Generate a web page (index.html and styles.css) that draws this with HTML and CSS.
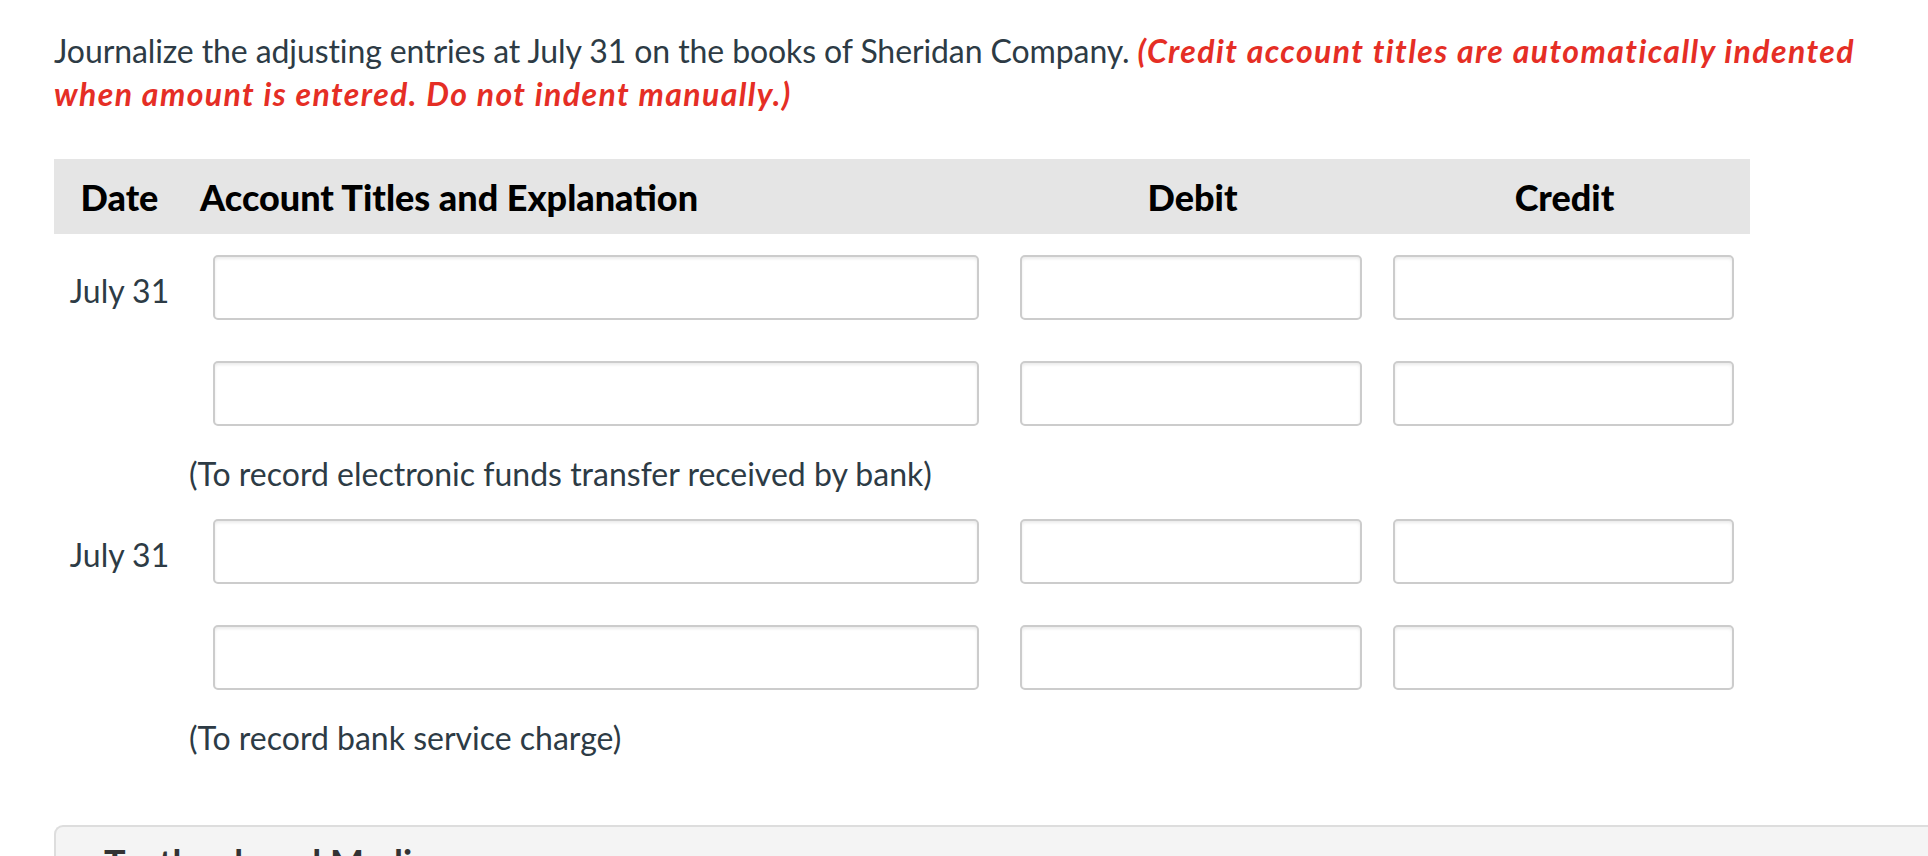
FILE: index.html
```html
<!DOCTYPE html>
<html lang="en">
<head>
<meta charset="utf-8">
<title>Journal entries</title>
<link rel="stylesheet" href="styles.css">
</head>
<body>
<div class="page">
  <p class="prompt">Journalize the adjusting entries at July 31 on the books of Sheridan Company. <em class="note">(Credit account titles are automatically indented when amount is entered. Do not indent manually.)</em></p>

  <div class="journal">
    <div class="head">
      <div class="h-date">Date</div>
      <div class="h-acct">Account Titles and Explanation</div>
      <div class="h-amt">Debit</div>
      <div class="h-amt">Credit</div>
    </div>

    <div class="row">
      <div class="date">July 31</div>
      <div class="cell acct"><input class="field" type="text"></div>
      <div class="cell debit"><input class="field" type="text"></div>
      <div class="cell credit"><input class="field" type="text"></div>
    </div>
    <div class="row">
      <div class="date"></div>
      <div class="cell acct"><input class="field" type="text"></div>
      <div class="cell debit"><input class="field" type="text"></div>
      <div class="cell credit"><input class="field" type="text"></div>
    </div>
    <div class="explain">(To record electronic funds transfer received by bank)</div>

    <div class="row">
      <div class="date">July 31</div>
      <div class="cell acct"><input class="field" type="text"></div>
      <div class="cell debit"><input class="field" type="text"></div>
      <div class="cell credit"><input class="field" type="text"></div>
    </div>
    <div class="row">
      <div class="date"></div>
      <div class="cell acct"><input class="field" type="text"></div>
      <div class="cell debit"><input class="field" type="text"></div>
      <div class="cell credit"><input class="field" type="text"></div>
    </div>
    <div class="explain">(To record bank service charge)</div>
  </div>

  <div class="media">
    <div class="media-title">Textbook and Media</div>
  </div>
</div>
</body>
</html>
```

FILE: styles.css
```css
html, body {
  margin: 0;
  padding: 0;
  background: #ffffff;
  overflow: hidden;
}

.page {
  font-family: "Lato", "Liberation Sans", sans-serif;
  color: #2d3b45;
  font-size: 32px;
  padding-left: 54px;
  height: 856px;
  overflow: hidden;
}

.prompt {
  margin: 0;
  padding-top: 29px;
  line-height: 43px;
  width: 1820px;
  letter-spacing: -0.1px;
}

.note {
  color: #e52e25;
  font-weight: 700;
  font-style: italic;
  letter-spacing: 1.4px;
}

.journal {
  width: 1696px;
  margin-top: 44px;
}

.head {
  display: grid;
  grid-template-columns: 135px 831px 373px 357px;
  background: #e5e5e5;
  height: 75px;
  align-items: center;
  color: #000000;
  font-weight: 900;
  font-size: 36px;
  letter-spacing: 0;
}

.h-date {
  text-align: center;
  padding-right: 4px;
}

.h-acct {
  padding-left: 11px;
}

.h-amt {
  text-align: center;
  padding-right: 28px;
}

.h-amt:last-child {
  padding-right: 14px;
}

.row {
  display: grid;
  grid-template-columns: 135px 831px 373px 357px;
  align-items: center;
  height: 106px;
}

.date {
  text-align: center;
  padding-right: 4px;
  padding-top: 6px;
}

.cell {
  display: flex;
}

.acct {
  padding-left: 24px;
  padding-right: 41px;
}

.debit {
  padding-right: 31px;
}

.credit {
  padding-right: 16px;
}

.field {
  box-sizing: border-box;
  width: 100%;
  height: 65px;
  margin: 0;
  border: 2px solid #cccccc;
  border-radius: 5px;
  background: #ffffff;
  box-shadow: inset 0 2px 3px rgba(0, 0, 0, 0.08);
  font: inherit;
}

.explain {
  padding-left: 135px;
  padding-top: 6px;
  padding-bottom: 3px;
  line-height: 43px;
}

.media {
  margin-top: 63px;
  background: #f4f4f4;
  border: 2px solid #dddddd;
  border-right: none;
  border-radius: 9px 0 0 0;
  height: 120px;
  padding-left: 48px;
  padding-top: 14px;
  box-sizing: border-box;
}

.media-title {
  font-size: 36px;
  line-height: 43px;
  font-weight: 700;
  color: #333333;
}
```
